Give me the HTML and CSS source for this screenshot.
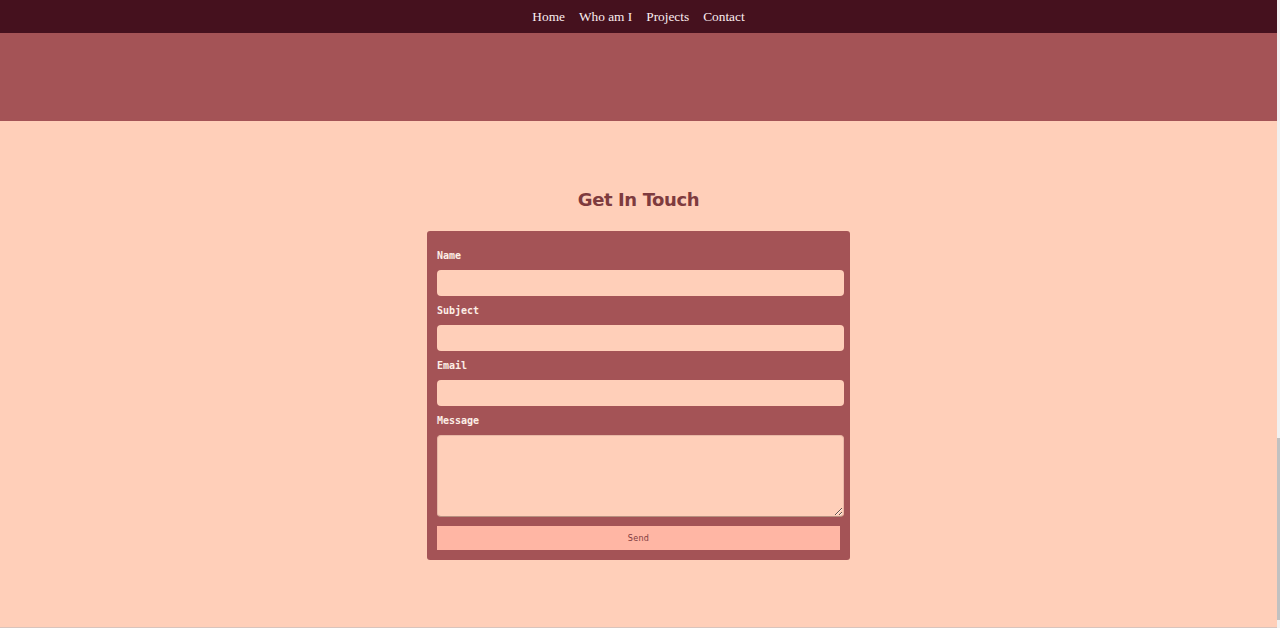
FILE: index.html
```html
<!DOCTYPE html>
<html lang="en">
<head>
<meta charset="utf-8">
<title>Contact</title>
<link rel="stylesheet" href="styles.css">
</head>
<body>
<div class="page">
  <nav class="nav">
    <a href="#" class="nav-link">Home</a>
    <a href="#" class="nav-link">Who am I</a>
    <a href="#" class="nav-link">Projects</a>
    <a href="#" class="nav-link">Contact</a>
  </nav>
  <div class="band"></div>
  <section class="contact">
    <h2 class="contact-title">Get In Touch</h2>
    <form class="card">
      <label class="field-label" for="name">Name</label>
      <input class="field" id="name" type="text">
      <label class="field-label" for="subject">Subject</label>
      <input class="field" id="subject" type="text">
      <label class="field-label" for="email">Email</label>
      <input class="field" id="email" type="email">
      <label class="field-label" for="message">Message</label>
      <textarea class="field field-area" id="message"></textarea>
      <button class="send" type="button">Send</button>
    </form>
  </section>
</div>
<div class="scrollbar"><div class="thumb"></div></div>
</body>
</html>
```

FILE: styles.css
```css
* { box-sizing: border-box; }
html, body { margin: 0; padding: 0; }
body {
  background: #ffcfb9;
  font-family: "Liberation Serif", "Times New Roman", serif;
  height: 628px;
  overflow: hidden;
  display: flex;
}
.page {
  flex: 1;
  display: flex;
  flex-direction: column;
  border-bottom: 1px solid #d9c4bc;
}
.scrollbar {
  width: 3px;
  background: #f1f1f1;
  padding-top: 438px;
  padding-bottom: 8px;
  display: flex;
}
.thumb {
  flex: 1;
  background: #c1c1c1;
}
.nav {
  height: 33px;
  background: #45111e;
  display: flex;
  justify-content: center;
  align-items: center;
  gap: 14px;
  padding-top: 1px;
}
.nav-link {
  color: #fbeef0;
  text-decoration: none;
  font-size: 13.33px;
  line-height: 16px;
}
.band {
  height: 88px;
  background: #a45356;
}
.contact {
  flex: 1;
  display: flex;
  flex-direction: column;
  align-items: center;
  padding-top: 67px;
}
.contact-title {
  margin: 0 0 19px 0;
  height: 24px;
  line-height: 24px;
  font-family: "DejaVu Sans", sans-serif;
  font-weight: bold;
  font-size: 18px;
  color: #7e3b3e;
  letter-spacing: -0.4px;
}
.card {
  width: 423px;
  background: #a45356;
  border-radius: 3px;
  padding: 19px 10px 10px 10px;
  display: flex;
  flex-direction: column;
  align-items: flex-start;
}
.field-label {
  font-family: "DejaVu Sans Mono", monospace;
  font-weight: bold;
  font-size: 10px;
  line-height: 12px;
  color: #fdeee6;
  margin: 9px 0 8px 0;
}
.field-label:first-child { margin-top: 0; }
.field {
  width: 407px;
  height: 26px;
  border: none;
  border-radius: 4px;
  background: #ffcfb9;
  margin: 0;
  display: block;
}
.field-area {
  height: 82px;
  border: 1px solid #e8b8a6;
  border-bottom-color: #b89080;
  resize: vertical;
}
.send {
  margin-top: 9px;
  width: 403px;
  height: 24px;
  border: none;
  background: #ffb6a4;
  color: #7e3b3e;
  font-family: "DejaVu Sans", sans-serif;
  font-size: 8px;
  letter-spacing: 0.3px;
  padding: 0;
}
```
